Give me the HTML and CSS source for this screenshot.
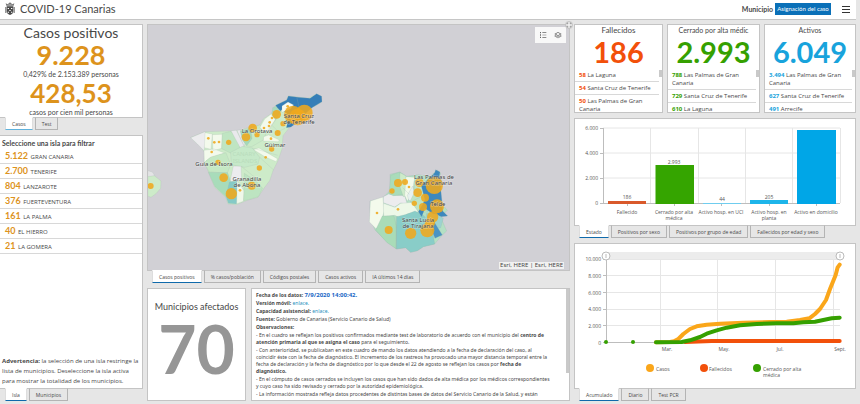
FILE: index.html
```html
<!DOCTYPE html>
<html lang="es">
<head>
<meta charset="utf-8">
<title>COVID-19 Canarias</title>
<link rel="stylesheet" href="styles.css">
</head>
<body>
<header class="topbar">
  <svg class="crest" viewBox="0 0 30 42" aria-hidden="true">
    <path d="M5 13h20v15q0 8-10 11Q5 36 5 28z" fill="#4a4a4a"/>
    <path d="M4 11 2 4l6 3 7-6 7 6 6-3-2 7z" fill="#777"/>
    <path d="M1 15h3v18H1zm25 0h3v18h-3z" fill="#666"/>
    <path d="M8 18h4v3H8zm10 0h4v3h-4zm-5 6h4v3h-4zm-5 5h4v3H8zm10 0h4v3h-4zM10 8h10v1H10z" fill="#fff"/>
  </svg>
  <h1>COVID-19 Canarias</h1>
  <span class="filter-name">Municipio</span>
  <button class="filter" type="button">Asignación del caso</button>
  <button class="menu" type="button" aria-label="Menú"><span></span><span></span><span></span></button>
</header>

<main class="board">
  <section class="column">
    <div class="group">
      <article class="panel totals">
        <h2>Casos positivos</h2>
        <strong class="total-main">9.228</strong>
        <p>0,429% de 2.153.389 personas</p>
        <strong class="total-rate">428,53</strong>
        <p>casos por cien mil personas</p>
      </article>
      <nav class="tabs"><button class="tab light" type="button">Casos</button><button class="tab" type="button">Test</button></nav>
    </div>
    <div class="group grow">
      <article class="panel islands">
        <h3>Seleccione una isla para filtrar</h3>
        <ul>
          <li><b>5.122</b> GRAN CANARIA</li>
          <li><b>2.700</b> TENERIFE</li>
          <li><b>804</b> LANZAROTE</li>
          <li><b>376</b> FUERTEVENTURA</li>
          <li><b>161</b> LA PALMA</li>
          <li><b>40</b> EL HIERRO</li>
          <li><b>21</b> LA GOMERA</li>
        </ul>
        <p class="warning"><b>Advertencia:</b> la selección de una isla restringe la<br>lista de municipios. Deseleccione la isla activa<br>para mostrar la totalidad de los municipios.</p>
      </article>
      <nav class="tabs"><button class="tab active" type="button">Isla</button><button class="tab" type="button">Municipios</button></nav>
    </div>
  </section>

  <section class="column center">
    <div class="group grow">
      <article class="panel map">
        <svg class="map-canvas" viewBox="148 25 421 245" preserveAspectRatio="xMidYMid slice" role="img" aria-label="Mapa de casos por municipio">
          <g transform="translate(145 80) scale(.33333)" stroke="#9fb0a6" stroke-width="1" stroke-opacity=".6">
            <path fill="#e4e4e6" d="M8 272l14 4 8 12-22 4z"/>
            <path fill="#cdebc9" d="M8 290l20-3 20 16-1 22-14 16-15 11-10-4z"/>
            <path fill="#cdebc9" d="M137 173l43-18 75-2 30-2 35-11 25-5 10-18 25-17 12-24 33-16 4-12 35 4 25 3 25-13 15 8v17l-30 17-20 18-32 30-13 10-20 25-3 40-12 35-15 30-10 30-15 20-20 30-30 8-35 14-25-2-7-20-33-30-20-50-12-25 2-30-15-20z"/>
            <path fill="#ececee" d="M137 173l43-18 5 15-8 42-20-20z"/>
            <path fill="#f3faec" d="M180 158l22 4-4 46-20-5zM202 164l30-1-2 42-26 7zM177 211l30-4 32 12-45 15-16 13z"/>
            <path fill="#bfe5c2" d="M232 160l26-6 18 20 10 30-28 16-28-14z"/>
            <path fill="#e9e9ec" d="M258 152l16-1 24 48-12 5zM276 151l10-1 14 40-3 9z"/>
            <path fill="#a4d9b9" d="M286 154l32-11 3 34-16 20-13-17z"/>
            <path fill="#c9eac7" d="M318 143l27-8 20 20-10 25-35 20-15-2 16-22z"/>
            <path fill="#f3faec" d="M345 142l14-25 24-18 8 18-20 35-14 5zM356 170l15-5 32 15-3 5-45-2zM333 206l9-2 55 32-3 9-33-14-35-22z"/>
            <path fill="#c6e9c9" d="M257 217l35-18 30 5 22 28-5 20-40 10-40-8z"/>
            <path fill="#c5e8c4" d="M178 247l20-16 45-13 14 36-10 25-55-3z"/>
            <path fill="#ececee" d="M265 258l23 1 2 42-35 4z"/>
            <path fill="#a8dcba" d="M190 277l58 1 10 30-15 42-33-30z"/>
            <path fill="#85cac6" d="M253 306l23-4 4 34-5 36-25-2-7-20z"/>
            <path fill="#eff8e9" d="M276 303l22 30-3 31-20 7z"/>
            <path fill="#bde4c1" d="M298 280l35 23 20 22-13 25-30 9-14 3z"/>
            <path fill="#357eb8" d="M392 76l33-16 5-12 30 4 35 3 20-14 15 8 1 16-30 18-22 20-28 28-13 10-14 2 4-16-3-28-15-10-9 10z"/>
            <path fill="#a9d9bd" d="M383 83l10-4 14 15-15 25-12-14z"/>
            <path fill="#f7fbf3" d="M411 78l18-12 17 9-10 12-25 10z"/>
            <path fill="none" d="M455 50l10 45 18 5M322 204l76 22M344 232l42 38M289 259l55 45M365 155l35-45M375 130l25 25 20-10"/>
          </g>
          <g transform="translate(340 150) scale(.33333)" stroke="#8eaaa4" stroke-width="1" stroke-opacity=".6">
            <path fill="#b4e0c4" d="M150 73L180 66 200 79 235 74 270 79 292 61 302 69 300 82 306 96 298 106 305 161 322 181 304 199 308 215 320 243 304 258 284 282 250 290 232 302 212 307 197 293 170 297 140 275 105 240 90 205 90 153 125 147 152 120z"/>
            <path fill="#f3faec" d="M91 153l38-12 4 40-12 45-13 10-20-20z"/>
            <path fill="#ececee" d="M130 140l16-8 18 4 30 1 8 26-20-4-18 12-34-13z"/>
            <path fill="#a9dcba" d="M147 131l5-55 27-10 12 30-3 38-28 3z"/>
            <path fill="#cdebc9" d="M180 68l18 10 4 58-12 4-12-34z"/>
            <path fill="#f2faeb" d="M198 80l26 2-5 40-17 32-8-18z"/>
            <path fill="#e8f1ef" d="M202 136l16-28 6 25-8 22-10-5z"/>
            <path fill="#edf8e8" d="M130 160l35 12 17-12 36-3 18 28-36 7-8 16-28-12-33 4z"/>
            <path fill="#a9dcb8" d="M107 240l20-42 35-1 7 30-1 69-28-19z"/>
            <path fill="#bfe4c4" d="M222 95l25 5 15 32-12 28 12 25-25 3-26-36 12-24z"/>
            <path fill="#89cdc8" d="M170 200L200 193 225 183 253 198 278 243 284 282 250 290 232 302 212 307 197 293 169 297z"/>
            <path fill="#3d88bd" d="M244 108l40-40 3-9 13 7-2 14 9 20-5 15 4 40 2 28 15 15-20 2-20-5-28-20-10 25-10-15 20-35z"/>
            <path fill="#9dd3d0" d="M260 190l30 3 20 12-8 28-27 6-22-15z"/>
            <path fill="#4b94c4" d="M282 215l25 40-22 10-10-25z"/>
            <path fill="none" d="M188 113l20 20M210 157l50-25M168 198l2 98"/>
          </g>
          <g fill="#efa91c" fill-opacity=".88">
            <g transform="translate(145 80) scale(.33333)">
              <circle cx="17" cy="318" r="9"/><circle cx="444" cy="104" r="27"/><circle cx="478" cy="99" r="25"/><circle cx="458" cy="111" r="25"/><circle cx="395" cy="103" r="13"/><circle cx="414" cy="131" r="8"/><circle cx="323" cy="144" r="13"/><circle cx="303" cy="171" r="13"/><circle cx="336" cy="164" r="8"/><circle cx="398" cy="159" r="9"/><circle cx="251" cy="187" r="8"/><circle cx="380" cy="207" r="8"/><circle cx="219" cy="247" r="8"/><circle cx="343" cy="264" r="8"/><circle cx="236" cy="293" r="13"/><circle cx="259" cy="341" r="17"/><circle cx="320" cy="317" r="12"/><circle cx="190" cy="175" r="4"/><circle cx="208" cy="187" r="4"/><circle cx="222" cy="186" r="4"/><circle cx="200" cy="216" r="4"/><circle cx="285" cy="331" r="4"/><circle cx="362" cy="232" r="4"/><circle cx="378" cy="176" r="4"/><circle cx="357" cy="144" r="4"/><circle cx="372" cy="138" r="4"/><circle cx="374" cy="127" r="4"/><circle cx="381" cy="114" r="4"/><circle cx="428" cy="79" r="4"/>
            </g>
            <g transform="translate(340 150) scale(.33333)">
              <circle cx="283" cy="106" r="26"/><circle cx="291" cy="169" r="21"/><circle cx="174" cy="99" r="12"/><circle cx="195" cy="96" r="9"/><circle cx="156" cy="123" r="8"/><circle cx="233" cy="128" r="13"/><circle cx="255" cy="143" r="12"/><circle cx="223" cy="160" r="8"/><circle cx="249" cy="171" r="12"/><circle cx="278" cy="201" r="17"/><circle cx="270" cy="218" r="15"/><circle cx="262" cy="241" r="21"/><circle cx="212" cy="250" r="17"/><circle cx="146" cy="240" r="12"/><circle cx="238" cy="98" r="13"/><circle cx="111" cy="189" r="4"/><circle cx="174" cy="178" r="4"/><circle cx="207" cy="111" r="4"/>
            </g>
          </g>
          <g class="region"><text x="244" y="156">CANARY</text><text x="245" y="163">ISLANDS</text></g>
          <g class="places">
            <text x="299" y="118">Santa Cruz</text><text x="299" y="124">de Tenerife</text>
            <text x="257" y="133">La Orotava</text><text x="275" y="147">Güímar</text>
            <text x="214" y="166">Guía de Isora</text>
            <text x="247" y="181">Granadilla</text><text x="247" y="187">de Abona</text>
            <text x="434" y="179">Las Palmas de</text><text x="434" y="185">Gran Canaria</text>
            <text x="438" y="206">Telde</text>
            <text x="418" y="222">Santa Lucía</text><text x="418" y="228">de Tirajana</text>
          </g>
        </svg>
        <div class="map-tools">
          <button type="button" aria-label="Leyenda"><svg viewBox="0 0 24 24"><path d="M3 3h3v4H3zm0 7h3v4H3zm0 7h3v4H3zM10 4h12v2H10zm0 7h12v2H10zm0 7h12v2H10z"/></svg></button>
          <button type="button" aria-label="Capas"><svg viewBox="0 0 24 24"><path d="M12 3l11 6-11 6L1 9zM12 5.500 5.500 9 12 12.500 18.500 9zM1 13l2-1 9 5 9-5 2 1-11 6zM1 16l2-1 9 5 9-5 2 1-11 6z"/></svg></button>
        </div>
        <small class="credits">Esri, HERE | Esri, HERE</small>
        <button class="expand" type="button" aria-label="Ampliar"><svg viewBox="0 0 24 24"><circle cx="12" cy="12" r="11" fill="#eee" stroke="#888"/><path d="M6 10V6h4M14 6h4v4M18 14v4h-4M10 18H6v-4" fill="none" stroke="#666" stroke-width="2"/></svg></button>
      </article>
      <nav class="tabs"><button class="tab active" type="button">Casos positivos</button><button class="tab" type="button">% casos/población</button><button class="tab" type="button">Códigos postales</button><button class="tab" type="button">Casos activos</button><button class="tab" type="button">IA últimos 14 días</button></nav>
    </div>
    <div class="bottom">
      <article class="panel affected"><h2>Municipios afectados</h2><strong>70</strong></article>
      <article class="panel notes">
        <p><b>Fecha de los datos: <span class="stamp">7/9/2020 14:00:42.</span></b></p>
        <p><b>Versión móvil:</b> <a href="#movil">enlace.</a></p>
        <p><b>Capacidad asistencial:</b> <a href="#capacidad">enlace.</a></p>
        <p><b>Fuente:</b> Gobierno de Canarias (Servicio Canario de Salud)</p>
        <p><b>Observaciones:</b></p>
        <p>- En el cuadro se reflejan los positivos confirmados mediante test de laboratorio de acuerdo con el municipio del <b>centro de<br>atención primaria al que se asigna el caso</b> para el seguimiento.</p>
        <p>- Con anterioridad, se publicaban en este cuadro de mando los datos atendiendo a la fecha de declaración del caso, al<br>coincidir éste con la fecha de diagnóstico. El incremento de los rastreos ha provocado una mayor distancia temporal entre la<br>fecha de declaración y la fecha de diagnóstico por lo que desde el 22 de agosto se reflejan los casos por <b>fecha de<br>diagnóstico.</b></p>
        <p>- En el cómputo de casos cerrados se incluyen los casos que han sido dados de alta médica por los médicos correspondientes<br>y cuyo caso ha sido revisado y cerrado por la autoridad epidemiológica.</p>
        <p>- La información mostrada refleja datos procedentes de distintas bases de datos del Servicio Canario de la Salud, y están</p>
      </article>
    </div>
  </section>

  <section class="column right">
    <div class="cards">
      <article class="panel card red"><h2>Fallecidos</h2><strong>186</strong>
        <ul><li><b>58</b> La Laguna</li><li><b>54</b> Santa Cruz de Tenerife</li><li><b>50</b> Las Palmas de Gran Canaria</li></ul></article>
      <article class="panel card green"><h2>Cerrado por alta médic</h2><strong>2.993</strong>
        <ul><li><b>788</b> Las Palmas de Gran Canaria</li><li><b>729</b> Santa Cruz de Tenerife</li><li><b>610</b> La Laguna</li></ul></article>
      <article class="panel card blue"><h2>Activos</h2><strong>6.049</strong>
        <ul><li><b>3.494</b> Las Palmas de Gran Canaria</li><li><b>627</b> Santa Cruz de Tenerife</li><li><b>491</b> Arrecife</li></ul></article>
    </div>
    <div class="group">
      <article class="panel chart">
        <svg viewBox="575 119 280 106" role="img" aria-label="Casos por estado">
          <path class="grid" d="M603 128h237M603 153h237M603 178h237M650.500 128v75M698.500 128v75M745.500 128v75M792.500 128v75M840.500 128v75"/>
          <path class="axis" d="M603.500 128v76M600 128.500h3M600 153.500h3M600 178.500h3M600 203.500h240M627.500 204v2M674.500 204v2M721.500 204v2M769.500 204v2M816.500 204v2"/>
          <path fill="#d9592b" d="M608 201h38v3h-38z"/><path fill="#35a500" d="M655.500 165h38.500v39h-38.500z"/><path fill="#6fcdef" d="M703 203h38v1h-38z"/><path fill="#1db5ea" d="M750 200h38v4h-38z"/><path fill="#00a6e7" d="M797 130h39v74h-39z"/>
          <g class="scale"><text x="598" y="130">6.000</text><text x="598" y="155">4.000</text><text x="598" y="180">2.000</text><text x="598" y="205">0</text></g>
          <g class="labels"><text x="627" y="199">186</text><text x="674" y="164">2.993</text><text x="722" y="201">44</text><text x="769" y="199">205</text>
          <text x="627" y="214">Fallecido</text><text x="674" y="214">Cerrado por alta</text><text x="674" y="220">médica</text><text x="721" y="214">Activo hosp. en UCI</text><text x="769" y="214">Activo hosp. en</text><text x="769" y="220">planta</text><text x="816" y="214">Activo en domicilio</text></g>
        </svg>
      </article>
      <nav class="tabs"><button class="tab active" type="button">Estado</button><button class="tab" type="button">Positivos por sexo</button><button class="tab" type="button">Positivos por grupo de edad</button><button class="tab" type="button">Fallecidos por edad y sexo</button></nav>
    </div>
    <div class="group grow">
      <article class="panel chart">
        <svg viewBox="575 245 280 142" role="img" aria-label="Evolución acumulada">
          <path fill="#ececec" d="M606 253h234v7H606z"/>
          <path class="grid" d="M606 260.500h234M606 276.500h234M606 293.500h234M606 310.500h234M606 326.500h234M660.500 260v83M717.500 260v83M775.500 260v83M833.500 260v83"/>
          <path class="axis" d="M606.500 260v84M603 260.500h3M603 276.500h3M603 293.500h3M603 310.500h3M603 326.500h3M603 343.500h237"/>
          <g transform="translate(570 240) scale(.33333)" fill="none" stroke-width="12" stroke-linecap="round" stroke-linejoin="round">
            <path stroke="#faa61a" d="M258 310L300 309 312 307 325 300 340 285 360 270 380 262 410 257 450 254 520 251 600 249 650 248 690 243 718 238 735 225 750 210 768 183 780 150 790 125 797 108 803 85 809 77"/>
            <path stroke="#f2500a" d="M345 309L425 306 809 306"/>
            <path stroke="#35a000" d="M258 310L335 309 360 304 390 294 410 284 440 274 470 266 510 259 560 255 620 253 670 253 700 250 735 248 760 243 785 238 809 236"/>
          </g>
          <circle fill="#35a000" cx="606" cy="343" r="2"/><circle fill="#35a000" cx="633" cy="343" r="2"/>
          <g fill="#fff" stroke="#bbb"><circle cx="606" cy="257" r="4"/><circle cx="840" cy="257" r="4"/><path d="M606 255v4M840 255v4"/></g>
          <g class="scale"><text x="601" y="262">10.000</text><text x="601" y="279">8.000</text><text x="601" y="296">6.000</text><text x="601" y="312">4.000</text><text x="601" y="329">2.000</text><text x="601" y="346">0</text></g>
          <g class="labels"><text x="667" y="352">Mar.</text><text x="724" y="352">May.</text><text x="780" y="352">Jul.</text><text x="840" y="352">Sept.</text></g>
          <circle fill="#faa61a" cx="650" cy="369" r="4"/><circle fill="#f2500a" cx="704" cy="369" r="4"/><circle fill="#35a000" cx="757" cy="369" r="4"/>
          <g class="legend"><text x="656" y="372">Casos</text><text x="709" y="372">Fallecidos</text><text x="763" y="372">Cerrado por alta</text><text x="763" y="378">médica</text></g>
        </svg>
      </article>
      <nav class="tabs"><button class="tab active" type="button">Acumulado</button><button class="tab" type="button">Diario</button><button class="tab" type="button">Test PCR</button></nav>
    </div>
  </section>
</main>
</body>
</html>
```
FILE: styles.css
```css
* { box-sizing: border-box; }
body {
  margin: 0;
  min-height: 100vh;
  display: flex;
  flex-direction: column;
  background: #e6e6e6;
  color: #484848;
  font: 6px/8px "Open Sans", sans-serif;
}
h1, h2, h3, p, ul { margin: 0; padding: 0; font-weight: 400; }
h1, h2, h3, strong { font-family: Lato, sans-serif; }
ul { list-style: none; }
button { font: inherit; color: inherit; padding: 0; border: 0; background: none; }
a { color: #2790bd; text-decoration: none; }
svg { display: block; }

.topbar {
  height: 20px;
  display: flex;
  align-items: center;
  padding: 0 10px 1px 5px;
  margin-right: 4px;
  background: #fff;
  border-bottom: 1px solid #c6c6c6;
  font-family: Lato, sans-serif;
}
.crest { width: 10px; height: 14px; margin-right: 5px; }
.topbar h1 { flex: 1; font-size: 11px; line-height: 16px; }
.filter-name { font-size: 7px; font-weight: 700; margin-right: 2px; }
.filter { height: 12px; width: 56px; background: #0a70b8; color: #fff; }
.menu { display: flex; flex-direction: column; gap: 2px; width: 8px; margin-left: 11px; margin-right: -4px; }
.menu span { height: 1px; background: #333; }

.board {
  flex: 1;
  display: grid;
  grid-template-columns: 143fr 423fr 282fr;
  gap: 4px;
  padding: 4px 4px 3px 0;
}
.column { display: flex; flex-direction: column; gap: 5px; min-width: 0; }
.group { display: flex; flex-direction: column; }
.grow { flex: 1; }
.panel { position: relative; background: #fff; border: 1px solid #c4c4c4; min-width: 0; }
.column:first-child .panel { border-left: 0; }
.grow > .panel { flex: 1; }

.tabs { display: flex; gap: 2px; padding-left: 5px; margin-top: -1px; position: relative; }
.tab {
  height: 13px;
  padding: 0 6px;
  border: 1px solid #b4b4b4;
  border-top-color: #c4c4c4;
  font-size: 5px;
  white-space: nowrap;
}
.tab.active, .tab.light { background: #fff; border-color: #fff #ddd #0f6aab; }
.tab.light { border-bottom-color: #5fb2dc; }

.totals { text-align: center; height: 94px; }
.totals h2 { font-size: 14px; line-height: 15px; }
.totals strong { display: block; color: #dd931c; line-height: 30px; }
.total-main { font-size: 27px; }
.total-rate { font-size: 26px; }
.totals p { font: 7px/8px Lato, sans-serif; }

.islands { display: flex; flex-direction: column; }
.islands h3 { padding: 3px 2px 1px; font-size: 7px; font-weight: 700; line-height: 9px; }
.islands li { height: 15px; padding-left: 5px; line-height: 14px; border-bottom: 1px solid #d8d8d8; }
.islands li b { color: #dd931c; font: 700 9px/14px Lato, sans-serif; margin-right: 1px; }
.warning { margin-top: auto; padding: 0 2px 2px; line-height: 10px; white-space: nowrap; }

.map { background: #d1d0d5; min-height: 200px; }
.map-canvas { position: absolute; width: 100%; height: 100%; }
.places { font: 6px "Noto Sans", sans-serif; fill: #444; stroke: #fff; stroke-width: 1; stroke-opacity: .4; paint-order: stroke; text-anchor: middle; }
.region { font: 6px "Noto Sans", sans-serif; fill: #b9dcbc; text-anchor: middle; }
.map-tools { position: absolute; top: 2px; right: 3px; display: flex; gap: 7px; padding: 4px; background: #f8f8f8; }
.map-tools svg { width: 8px; height: 8px; fill: #666; }
.credits { position: absolute; right: 5px; bottom: 1px; padding: 0 1px; background: #f1f1f1; font: 6px/7px "Noto Sans", sans-serif; }
.expand { position: absolute; top: -4px; right: -4px; }
.expand svg { width: 8px; height: 8px; }

.bottom { display: grid; grid-template-columns: 99fr 319fr; gap: 5px; height: 113px; }
.affected { text-align: center; padding-top: 12px; }
.affected h2 { font-size: 9px; line-height: 11px; }
.affected strong { display: block; font-size: 66px; line-height: 74px; color: #969696; }
.notes { padding: 3px 6px 0 4px; overflow: hidden; white-space: nowrap; font: 5px/7px "Noto Sans", sans-serif; }
.notes p { margin-bottom: 1px; }
.notes::after { content: ""; position: absolute; top: 0; right: 0; width: 3px; height: 84px; background: #c9c9c9; }
.stamp { color: #1766c5; font-size: 6px; }

.cards { display: grid; grid-template-columns: 89fr 93fr 92fr; gap: 4px; height: 89px; }
.card { overflow: hidden; }
.card h2 { padding-top: 1px; font-size: 7px; line-height: 9px; text-align: center; white-space: nowrap; }
.card.red h2 { font-size: 8px; }
.card strong { display: block; font-size: 29px; line-height: 34px; text-align: center; }
.card ul { margin-right: 3px; }
.card li { padding: 2px 4px; border-bottom: 1px solid #d8d8d8; }
.card li:last-child { border-bottom: 0; }
.card::after { content: ""; position: absolute; top: 45px; right: 0; width: 3px; height: 7px; background: #c9c9c9; }
.red strong, .red b { color: #f2500a; }
.green strong, .green b { color: #35a000; }
.blue strong, .blue b { color: #18a3dc; }

.chart svg { width: 100%; }
.grid { stroke: #e6e6e6; fill: none; }
.axis { stroke: #bdbdbd; fill: none; }
.chart text { font: 5px "Open Sans", sans-serif; fill: #555; }
.scale { text-anchor: end; }
.labels { text-anchor: middle; }
```
